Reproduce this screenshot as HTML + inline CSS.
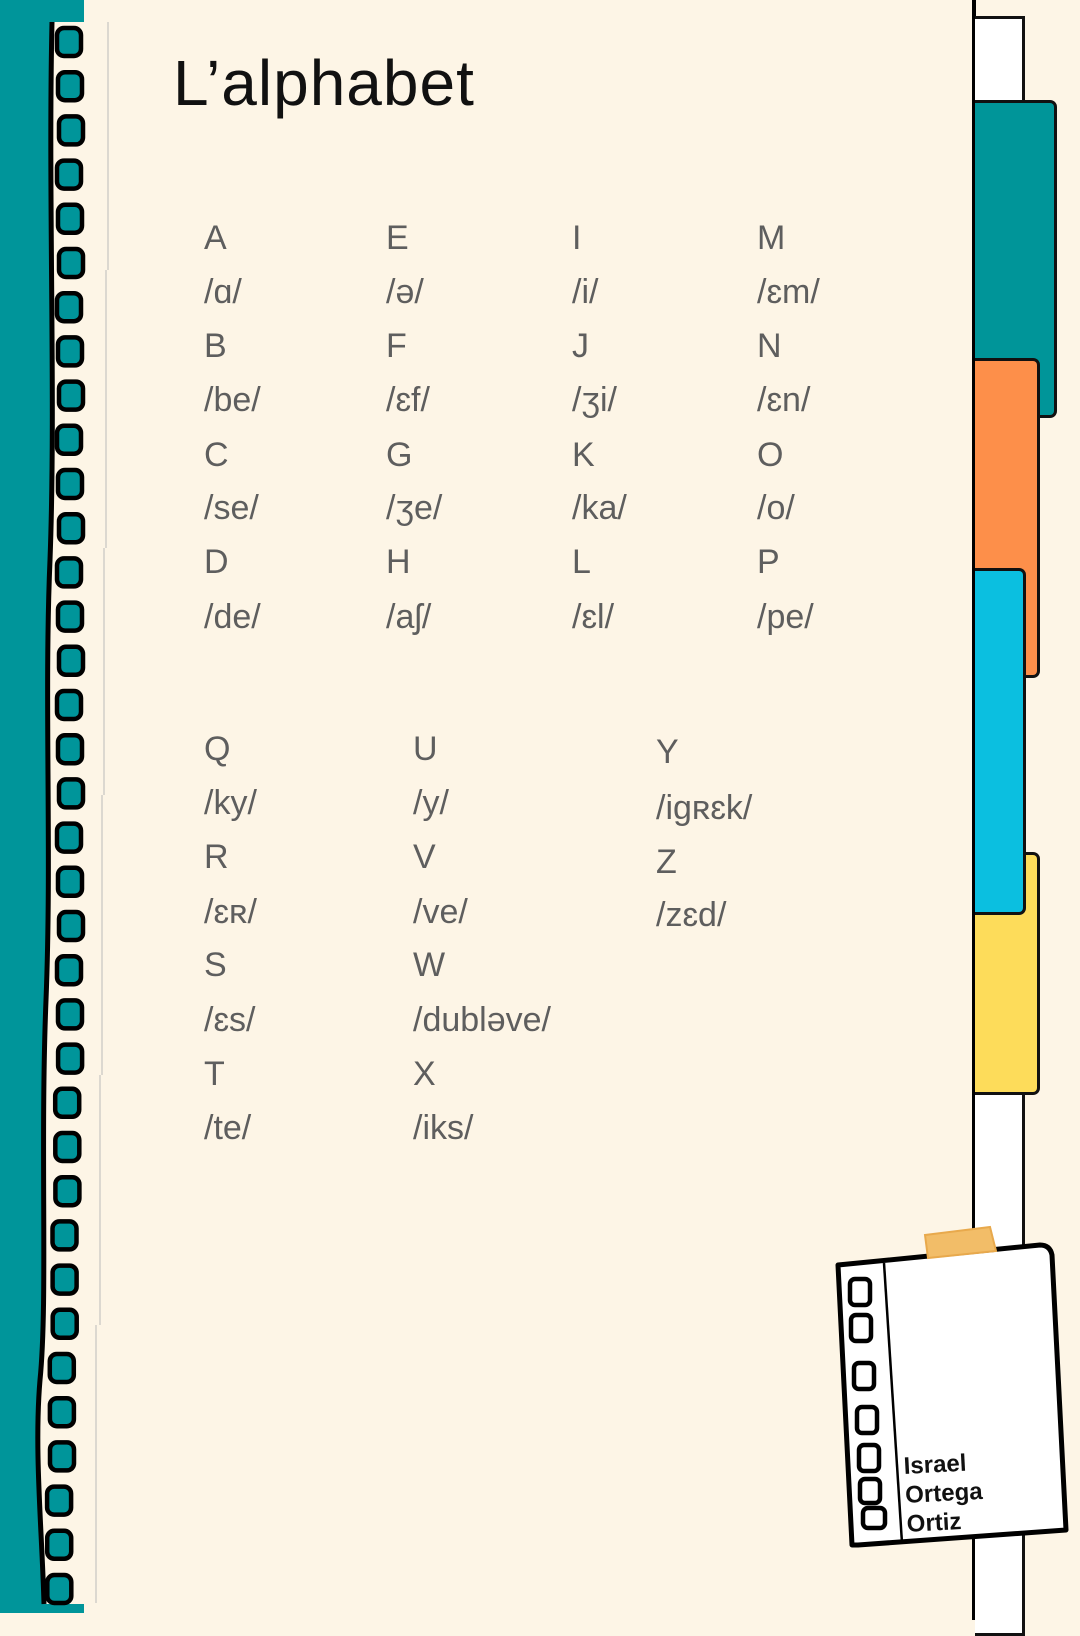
<!DOCTYPE html>
<html><head><meta charset="utf-8"><style>
html,body{margin:0;padding:0}
body{width:1080px;height:1620px;position:relative;overflow:hidden;background:#fdf5e6;font-family:"Liberation Sans",sans-serif}
.a{position:absolute}
.t{position:absolute;font-size:34px;color:#5e5e5e;line-height:1;transform:translateY(-50%)}
.tab{position:absolute;border:3px solid #111;border-left:none;border-radius:0 7px 7px 0;box-sizing:border-box}
</style></head><body>
<div class="a" style="left:0;top:0;width:84px;height:1613px;background:#00959a"></div>
<svg class="a" style="left:0;top:0" width="120" height="1620">
<path d="M52 22 C48 200 56 400 50 560 C44 700 52 850 46 1000 C40 1150 48 1300 40 1380 C34 1450 42 1530 44 1604 L110 1604 L110 22 Z" fill="#fdf5e6"/>
<path d="M52 22 C48 200 56 400 50 560 C44 700 52 850 46 1000 C40 1150 48 1300 40 1380 C34 1450 42 1530 44 1604" fill="none" stroke="#000" stroke-width="5"/>
<g stroke="#bbb" stroke-width="1" fill="none"><path d="M108 22 V270 M106 270 V548 M104 548 V795 M102 795 V1075 M100 1075 V1325 M96 1325 V1603"/></g>
<g fill="#00959a" stroke="#000" stroke-width="4.5" id="h"></g>
</svg>
<script>
var g=document.getElementById('h'),s='';
for(var i=0;i<36;i++){var y=28+i*44.2;var x=58-(i>22?(i-22)*0.9:0)+(i%3)-1;s+='<rect x="'+x+'" y="'+y+'" width="24" height="28" rx="7"/>';}
g.innerHTML=s;
</script>
<div class="a" style="left:972px;top:0;width:4px;height:1620px;background:#000"></div>
<div class="a" style="left:975px;top:16px;width:50px;height:1620px;background:#fff;border:3px solid #111;border-left:none;box-sizing:border-box"></div>
<div class="tab" style="left:975px;top:100px;width:82px;height:318px;background:#009599"></div>
<div class="tab" style="left:975px;top:358px;width:65px;height:320px;background:#fd8f4a"></div>
<div class="tab" style="left:975px;top:852px;width:65px;height:243px;background:#fddc5a"></div>
<div class="tab" style="left:975px;top:568px;width:51px;height:347px;background:#0bbfe0"></div>
<div class="a" style="left:173px;top:46px;font-size:64px;color:#111;letter-spacing:1px">L’alphabet</div>
<div class="t" style="left:204px;top:238px">A</div><div class="t" style="left:204px;top:292px">/ɑ/</div>
<div class="t" style="left:204px;top:346px">B</div><div class="t" style="left:204px;top:400px">/be/</div>
<div class="t" style="left:204px;top:455px">C</div><div class="t" style="left:204px;top:508px">/se/</div>
<div class="t" style="left:204px;top:562px">D</div><div class="t" style="left:204px;top:617px">/de/</div>
<div class="t" style="left:386px;top:238px">E</div><div class="t" style="left:386px;top:292px">/ə/</div>
<div class="t" style="left:386px;top:346px">F</div><div class="t" style="left:386px;top:400px">/ɛf/</div>
<div class="t" style="left:386px;top:455px">G</div><div class="t" style="left:386px;top:508px">/ʒe/</div>
<div class="t" style="left:386px;top:562px">H</div><div class="t" style="left:386px;top:617px">/aʃ/</div>
<div class="t" style="left:572px;top:238px">I</div><div class="t" style="left:572px;top:292px">/i/</div>
<div class="t" style="left:572px;top:346px">J</div><div class="t" style="left:572px;top:400px">/ʒi/</div>
<div class="t" style="left:572px;top:455px">K</div><div class="t" style="left:572px;top:508px">/ka/</div>
<div class="t" style="left:572px;top:562px">L</div><div class="t" style="left:572px;top:617px">/ɛl/</div>
<div class="t" style="left:757px;top:238px">M</div><div class="t" style="left:757px;top:292px">/ɛm/</div>
<div class="t" style="left:757px;top:346px">N</div><div class="t" style="left:757px;top:400px">/ɛn/</div>
<div class="t" style="left:757px;top:455px">O</div><div class="t" style="left:757px;top:508px">/o/</div>
<div class="t" style="left:757px;top:562px">P</div><div class="t" style="left:757px;top:617px">/pe/</div>
<div class="t" style="left:204px;top:749px">Q</div><div class="t" style="left:204px;top:803px">/ky/</div>
<div class="t" style="left:204px;top:857px">R</div><div class="t" style="left:204px;top:912px">/ɛʀ/</div>
<div class="t" style="left:204px;top:965px">S</div><div class="t" style="left:204px;top:1020px">/ɛs/</div>
<div class="t" style="left:204px;top:1074px">T</div><div class="t" style="left:204px;top:1128px">/te/</div>
<div class="t" style="left:413px;top:749px">U</div><div class="t" style="left:413px;top:803px">/y/</div>
<div class="t" style="left:413px;top:857px">V</div><div class="t" style="left:413px;top:912px">/ve/</div>
<div class="t" style="left:413px;top:965px">W</div><div class="t" style="left:413px;top:1020px">/dubləve/</div>
<div class="t" style="left:413px;top:1074px">X</div><div class="t" style="left:413px;top:1128px">/iks/</div>
<div class="t" style="left:656px;top:752px">Y</div><div class="t" style="left:656px;top:808px">/igʀɛk/</div>
<div class="t" style="left:656px;top:862px">Z</div><div class="t" style="left:656px;top:915px">/zɛd/</div>
<svg class="a" style="left:830px;top:1225px" width="250" height="330">
<path d="M8 40 L210 20 Q220 20 222 30 L236 305 L28 320 L22 320 Z" fill="#fff" stroke="#000" stroke-width="5" stroke-linejoin="round"/>
<path d="M54 38 L72 318" stroke="#000" stroke-width="2.5"/>
<g fill="none" stroke="#000" stroke-width="4.5">
<rect x="20" y="54" width="20" height="26" rx="5"/><rect x="21" y="90" width="20" height="26" rx="5"/>
<rect x="24" y="138" width="20" height="26" rx="5"/><rect x="27" y="182" width="20" height="26" rx="5"/>
<rect x="29" y="220" width="20" height="26" rx="5"/><rect x="30" y="254" width="20" height="24" rx="5"/>
<rect x="33" y="283" width="22" height="20" rx="5"/></g>
<path d="M95 10 L160 2 L166 26 L98 33 Z" fill="#f2bd68" stroke="#e8a94c" stroke-width="2"/>
</svg>
<div class="a" style="left:903px;top:1452px;font-size:24px;font-weight:bold;color:#111;line-height:29px;transform:rotate(-3deg);transform-origin:left top">Israel<br>Ortega<br>Ortiz</div>
</body></html>
